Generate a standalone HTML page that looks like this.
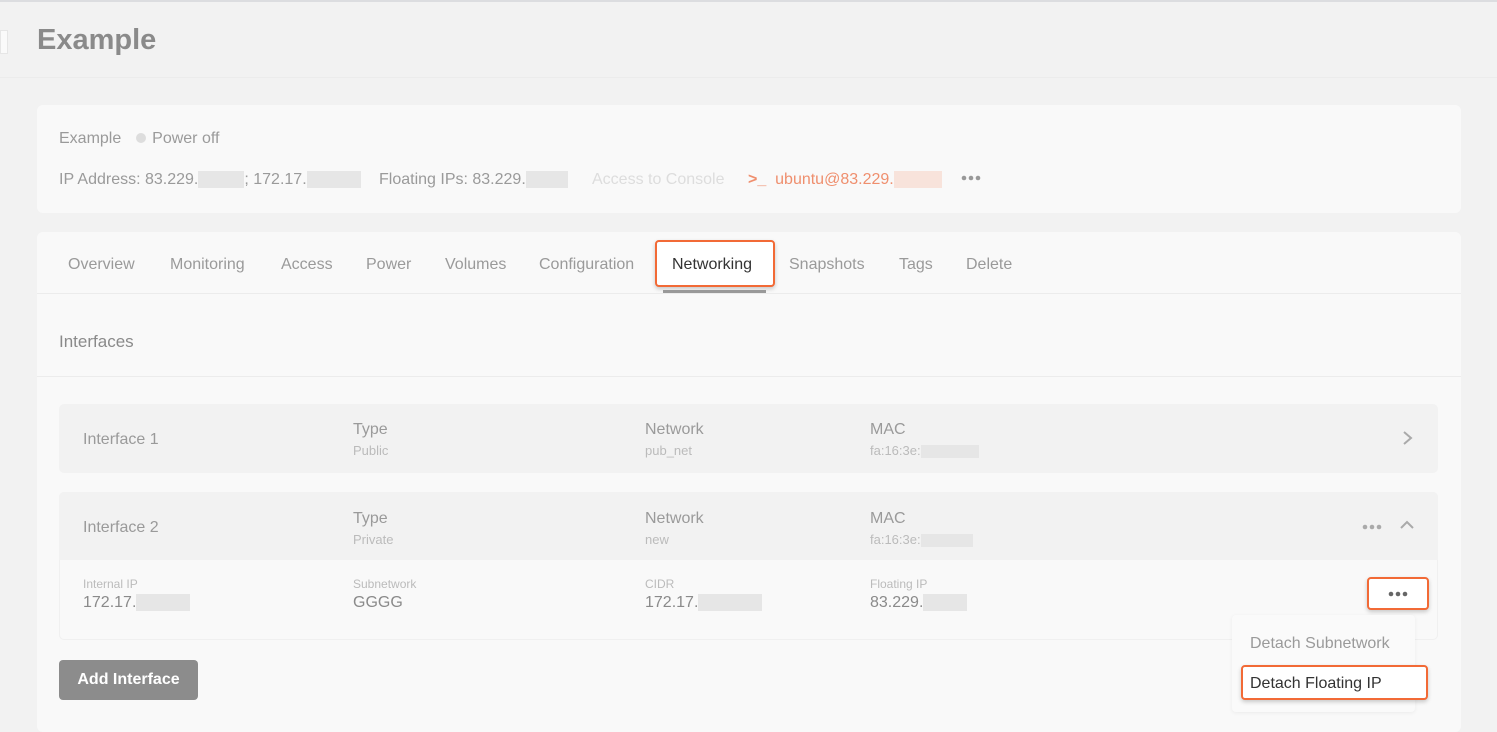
<!DOCTYPE html>
<html><head><style>
*{margin:0;padding:0;box-sizing:border-box}
body{width:1497px;height:726px;overflow:hidden;background:#f2f2f2;font-family:"Liberation Sans",sans-serif;position:relative;color:#999}
.a{position:absolute;white-space:nowrap}
.blur{display:inline-block;background:#e6e6e6;height:17px;vertical-align:middle}
</style></head><body>
<div class="a" style="left:0;top:0;width:1497px;height:2px;background:#dcdde0"></div>
<div class="a" style="left:0;top:30px;width:8px;height:24px;background:#fafafa;border:1px solid #e6e6e6"></div>
<div class="a" style="left:0;top:77px;width:1497px;height:1px;background:#ececec"></div>
<div class="a" style="left:37px;top:24px;font-size:29px;font-weight:bold;color:#8a8a8a">Example</div>

<div class="a" style="left:37px;top:105px;width:1424px;height:108px;background:#f9f9f9;border-radius:6px"></div>
<div class="a" style="left:59px;top:130px;font-size:16px;color:#9a9a9a">Example <span style="display:inline-block;width:10px;height:10px;border-radius:50%;background:#ddd;margin:0 2px 0 10px"></span> Power off</div>
<div class="a" style="left:59px;top:171px;font-size:16px;color:#9a9a9a">IP Address: 83.229.<span class="blur" style="width:46px"></span>; 172.17.<span class="blur" style="width:54px"></span></div>
<div class="a" style="left:379px;top:171px;font-size:16px;color:#9a9a9a">Floating IPs: 83.229.<span class="blur" style="width:42px"></span></div>
<div class="a" style="left:592px;top:171px;font-size:16px;color:#ddd">Access to Console</div>
<div class="a" style="left:748px;top:171px;font-size:16px;color:#ef8f6e"><b>&gt;_</b> &nbsp;ubuntu@83.229.<span class="blur" style="width:48px;background:#f8e3db"></span></div>
<svg class="a" style="left:961px;top:175px" width="20" height="6"><circle cx="3" cy="3" r="2.3" fill="#999"/><circle cx="10" cy="3" r="2.3" fill="#999"/><circle cx="17" cy="3" r="2.3" fill="#999"/></svg>

<div class="a" style="left:37px;top:232px;width:1424px;height:500px;background:#f9f9f9;border-radius:6px"></div>
<div class="a" style="left:37px;top:293px;width:1424px;height:1px;background:#ececec"></div>
<div class="a" style="top:256px;font-size:16px;color:#9a9a9a;left:68px">Overview</div>
<div class="a" style="top:256px;font-size:16px;color:#9a9a9a;left:170px">Monitoring</div>
<div class="a" style="top:256px;font-size:16px;color:#9a9a9a;left:281px">Access</div>
<div class="a" style="top:256px;font-size:16px;color:#9a9a9a;left:366px">Power</div>
<div class="a" style="top:256px;font-size:16px;color:#9a9a9a;left:445px">Volumes</div>
<div class="a" style="top:256px;font-size:16px;color:#9a9a9a;left:539px">Configuration</div>
<div class="a" style="left:655px;top:240px;width:120px;height:47px;background:#fff;border:2px solid #f26a36;border-radius:4px;box-shadow:0 2px 4px rgba(0,0,0,.2)"></div>
<div class="a" style="top:256px;font-size:16px;color:#333;left:672px">Networking</div>
<div class="a" style="left:663px;top:290px;width:103px;height:3px;background:#999"></div>
<div class="a" style="top:256px;font-size:16px;color:#9a9a9a;left:789px">Snapshots</div>
<div class="a" style="top:256px;font-size:16px;color:#9a9a9a;left:899px">Tags</div>
<div class="a" style="top:256px;font-size:16px;color:#9a9a9a;left:966px">Delete</div>

<div class="a" style="left:59px;top:332px;font-size:17px;color:#8a8a8a">Interfaces</div>
<div class="a" style="left:37px;top:376px;width:1424px;height:1px;background:#ececec"></div>

<div class="a" style="left:59px;top:404px;width:1379px;height:69px;background:#f2f2f2;border-radius:5px"></div>
<div class="a" style="left:83px;top:431px;font-size:16px;color:#9a9a9a">Interface 1</div>
<div class="a" style="left:353px;top:421px;font-size:16px;color:#9a9a9a">Type</div>
<div class="a" style="left:353px;top:443px;font-size:13px;color:#bbb">Public</div>
<div class="a" style="left:645px;top:421px;font-size:16px;color:#9a9a9a">Network</div>
<div class="a" style="left:645px;top:443px;font-size:13px;color:#bbb">pub_net</div>
<div class="a" style="left:870px;top:421px;font-size:16px;color:#9a9a9a">MAC</div>
<div class="a" style="left:870px;top:443px;font-size:13px;color:#bbb">fa:16:3e:<span class="blur" style="width:58px;height:13px"></span></div>
<svg class="a" style="left:1402px;top:430px" width="12" height="16"><path d="M2 2l7 6-7 6" fill="none" stroke="#aaa" stroke-width="2"/></svg>

<div class="a" style="left:59px;top:492px;width:1379px;height:148px;background:#f9f9f9;border:1px solid #f0f0f0;border-radius:5px"></div>
<div class="a" style="left:59px;top:492px;width:1379px;height:68px;background:#f2f2f2;border-radius:5px 5px 0 0"></div>
<div class="a" style="left:83px;top:519px;font-size:16px;color:#9a9a9a">Interface 2</div>
<div class="a" style="left:353px;top:510px;font-size:16px;color:#9a9a9a">Type</div>
<div class="a" style="left:353px;top:532px;font-size:13px;color:#bbb">Private</div>
<div class="a" style="left:645px;top:510px;font-size:16px;color:#9a9a9a">Network</div>
<div class="a" style="left:645px;top:532px;font-size:13px;color:#bbb">new</div>
<div class="a" style="left:870px;top:510px;font-size:16px;color:#9a9a9a">MAC</div>
<div class="a" style="left:870px;top:532px;font-size:13px;color:#bbb">fa:16:3e:<span class="blur" style="width:52px;height:13px"></span></div>
<svg class="a" style="left:1362px;top:524px" width="20" height="6"><circle cx="3" cy="3" r="2.3" fill="#aaa"/><circle cx="10" cy="3" r="2.3" fill="#aaa"/><circle cx="17" cy="3" r="2.3" fill="#aaa"/></svg>
<svg class="a" style="left:1399px;top:519px" width="16" height="12"><path d="M2 9l6-6 6 6" fill="none" stroke="#aaa" stroke-width="2"/></svg>

<div class="a" style="left:83px;top:577px;font-size:12px;color:#bbb">Internal IP</div>
<div class="a" style="left:83px;top:594px;font-size:16px;color:#8a8a8a">172.17.<span class="blur" style="width:54px"></span></div>
<div class="a" style="left:353px;top:577px;font-size:12px;color:#bbb">Subnetwork</div>
<div class="a" style="left:353px;top:594px;font-size:16px;color:#8a8a8a">GGGG</div>
<div class="a" style="left:645px;top:577px;font-size:12px;color:#bbb">CIDR</div>
<div class="a" style="left:645px;top:594px;font-size:16px;color:#8a8a8a">172.17.<span class="blur" style="width:64px"></span></div>
<div class="a" style="left:870px;top:577px;font-size:12px;color:#bbb">Floating IP</div>
<div class="a" style="left:870px;top:594px;font-size:16px;color:#8a8a8a">83.229.<span class="blur" style="width:44px"></span></div>

<div class="a" style="left:1367px;top:577px;width:62px;height:33px;background:#fff;border:2px solid #f26a36;border-radius:4px;box-shadow:0 2px 4px rgba(0,0,0,.2)"></div>
<svg class="a" style="left:1388px;top:591px" width="20" height="6"><circle cx="3" cy="3" r="2.3" fill="#666"/><circle cx="10" cy="3" r="2.3" fill="#666"/><circle cx="17" cy="3" r="2.3" fill="#666"/></svg>

<div class="a" style="left:59px;top:660px;width:139px;height:40px;background:#8c8c8c;border-radius:4px;color:#fff;font-size:16px;font-weight:bold;text-align:center;line-height:40px">Add Interface</div>

<div class="a" style="left:1232px;top:615px;width:183px;height:97px;background:#fafafa;border-radius:4px;box-shadow:0 1px 4px rgba(0,0,0,.06)"></div>
<div class="a" style="left:1250px;top:635px;font-size:16px;color:#9a9a9a">Detach Subnetwork</div>
<div class="a" style="left:1241px;top:665px;width:187px;height:35px;background:#fff;border:2px solid #f26a36;border-radius:4px;box-shadow:0 2px 4px rgba(0,0,0,.2)"></div>
<div class="a" style="left:1250px;top:675px;font-size:16px;color:#333">Detach Floating IP</div>
</body></html>
